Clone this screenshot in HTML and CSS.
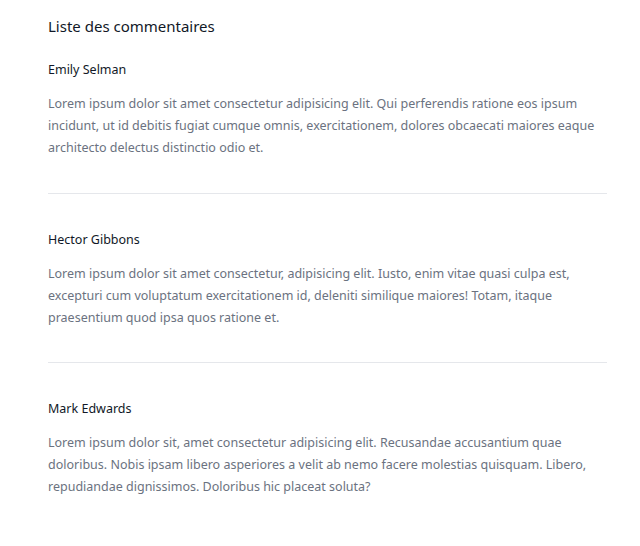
FILE: index.html
```html
<!DOCTYPE html>
<html lang="fr">
<head>
<meta charset="utf-8">
<title>Liste des commentaires</title>
<link rel="stylesheet" href="styles.css">
</head>
<body>
<main class="comments">
  <h1 class="comments-title">Liste des commentaires</h1>
  <article class="comment">
    <h2 class="comment-author">Emily Selman</h2>
    <p class="comment-text">Lorem ipsum dolor sit amet consectetur adipisicing elit. Qui perferendis ratione eos ipsum incidunt, ut id debitis fugiat cumque omnis, exercitationem, dolores obcaecati maiores eaque architecto delectus distinctio odio et.</p>
  </article>
  <hr class="divider">
  <article class="comment">
    <h2 class="comment-author">Hector Gibbons</h2>
    <p class="comment-text">Lorem ipsum dolor sit amet consectetur, adipisicing elit. Iusto, enim vitae quasi culpa est, excepturi cum voluptatum exercitationem id, deleniti similique maiores! Totam, itaque praesentium quod ipsa quos ratione et.</p>
  </article>
  <hr class="divider">
  <article class="comment">
    <h2 class="comment-author">Mark Edwards</h2>
    <p class="comment-text">Lorem ipsum dolor sit, amet consectetur adipisicing elit. Recusandae accusantium quae doloribus. Nobis ipsam libero asperiores a velit ab nemo facere molestias quisquam. Libero, repudiandae dignissimos. Doloribus hic placeat soluta?</p>
  </article>
</main>
</body>
</html>
```
FILE: styles.css
```css
html, body {
  margin: 0;
  padding: 0;
  background: #ffffff;
}

body {
  font-family: "Noto Sans", "Open Sans", sans-serif;
}

.comments {
  width: 559px;
  padding: 14px 0 0 48px;
}

.comments-title {
  margin: 0 0 22px;
  font-size: 15px;
  line-height: 24px;
  font-weight: 400;
  color: #111827;
}

.comment-author {
  margin: 0 0 13px;
  font-size: 12.5px;
  line-height: 20px;
  font-weight: 400;
  color: #111827;
}

.comment-text {
  margin: 0;
  font-size: 12.5px;
  line-height: 22px;
  color: #6b7280;
}

.divider {
  border: 0;
  border-top: 1px solid #e5e7eb;
  margin: 33.5px 0 36px;
}
```
